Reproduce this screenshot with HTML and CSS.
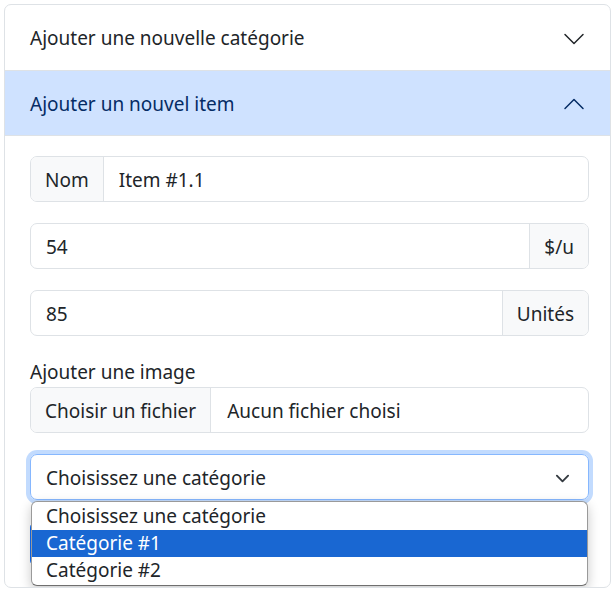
FILE: index.html
```html
<!DOCTYPE html>
<html lang="fr">
<head>
<meta charset="utf-8">
<title>Accordéon</title>
<link rel="stylesheet" href="styles.css">
</head>
<body>
<div class="accordion">
  <div class="acc-item">
    <div class="acc-header">
      <span class="acc-title">Ajouter une nouvelle catégorie</span>
      <svg class="acc-icon" viewBox="0 0 16 16" fill="none" stroke="#212529" stroke-width="1" stroke-linecap="round" stroke-linejoin="round"><path d="M2 5L8 11L14 5"/></svg>
    </div>
  </div>
  <div class="acc-item">
    <div class="acc-header active">
      <span class="acc-title">Ajouter un nouvel item</span>
      <svg class="acc-icon" viewBox="0 0 16 16" fill="none" stroke="#052c65" stroke-width="1" stroke-linecap="round" stroke-linejoin="round"><path d="M2 11L8 5L14 11"/></svg>
    </div>
    <div class="acc-body">
      <div class="input-group">
        <span class="ig-text">Nom</span>
        <span class="ig-input">Item #1.1</span>
      </div>
      <div class="input-group">
        <span class="ig-input">54</span>
        <span class="ig-text">$/u</span>
      </div>
      <div class="input-group">
        <span class="ig-input">85</span>
        <span class="ig-text">Unités</span>
      </div>
      <div class="form-label">Ajouter une image</div>
      <div class="input-group file">
        <span class="ig-text">Choisir un fichier</span>
        <span class="ig-input">Aucun fichier choisi</span>
      </div>
      <div class="select-wrap">
        <div class="select">
          <span>Choisissez une catégorie</span>
          <svg class="sel-icon" viewBox="0 0 16 16" fill="none" stroke="#343a40" stroke-width="2" stroke-linecap="round" stroke-linejoin="round"><path d="M2 5l6 6 6-6"/></svg>
        </div>
        <ul class="dropdown">
          <li>Choisissez une catégorie</li>
          <li class="hl">Catégorie #1</li>
          <li>Catégorie #2</li>
        </ul>
      </div>
      <button class="btn-primary" type="button" aria-label="Ajouter"></button>
    </div>
  </div>
</div>
</body>
</html>
```
FILE: styles.css
```css
html, body {
  margin: 0;
  background: #fff;
}
body {
  padding: 4px;
  font-family: "Noto Sans", "Open Sans", sans-serif;
  font-size: 19px;
  color: #212529;
}
.accordion {
  border: 1px solid #dee2e6;
  border-radius: 7px;
  overflow: hidden;
}
.acc-item + .acc-item {
  border-top: 1px solid #dee2e6;
}
.acc-header {
  display: flex;
  align-items: center;
  justify-content: space-between;
  height: 65px;
  padding: 2px 24px 0 25px;
  box-sizing: border-box;
  line-height: 29px;
}
.acc-header.active {
  height: 65px;
  background: #cfe2ff;
  color: #052c65;
  border-bottom: 1px solid #dee2e6;
}
.acc-icon {
  width: 24px;
  height: 24px;
}
.acc-body {
  padding: 20px 21px 20px 25px;
  position: relative;
}
.input-group {
  display: flex;
  height: 46px;
  box-sizing: border-box;
  border: 1px solid #dee2e6;
  border-radius: 7px;
  margin-bottom: 21px;
  overflow: hidden;
  line-height: 29px;
}
.ig-text {
  display: flex;
  align-items: center;
  padding: 2px 14px 0;
  background: #f8f9fa;
}
.ig-text:first-child {
  border-right: 1px solid #dee2e6;
}
.ig-text:last-child {
  border-left: 1px solid #dee2e6;
}
.ig-input {
  flex: 1;
  display: flex;
  align-items: center;
  padding: 2px 15px 0;
}
.form-label {
  line-height: 30px;
}
.file .ig-input {
  padding-left: 16px;
}
.select-wrap {
  position: relative;
  margin-bottom: 21px;
}
.select {
  display: flex;
  align-items: center;
  justify-content: space-between;
  height: 46px;
  box-sizing: border-box;
  border: 1px solid #86b7fe;
  border-radius: 7px;
  box-shadow: 0 0 0 4px rgba(13, 110, 253, 0.25);
  padding: 2px 18px 0 15px;
  line-height: 29px;
}
.sel-icon {
  width: 15px;
  height: 15px;
}
.dropdown {
  position: absolute;
  top: 47px;
  left: 1px;
  right: 1px;
  margin: 0;
  padding: 1px 0 1px;
  list-style: none;
  background: #fff;
  border: 1px solid #9a9a9a;
  border-bottom-color: #6f6f6f;
  border-radius: 6px;
  box-shadow: 0 4px 12px rgba(0, 0, 0, 0.22);
  z-index: 2;
  overflow: hidden;
}
.dropdown li {
  height: 27px;
  line-height: 27px;
  padding-left: 14px;
  font-size: 19px;
}
.dropdown li.hl {
  background: #1967d2;
  color: #fff;
}
.btn-primary {
  display: block;
  width: 120px;
  height: 46px;
  padding: 0;
  border: 1px solid #0d6efd;
  border-radius: 7px;
  background: #0d6efd;
}
```
